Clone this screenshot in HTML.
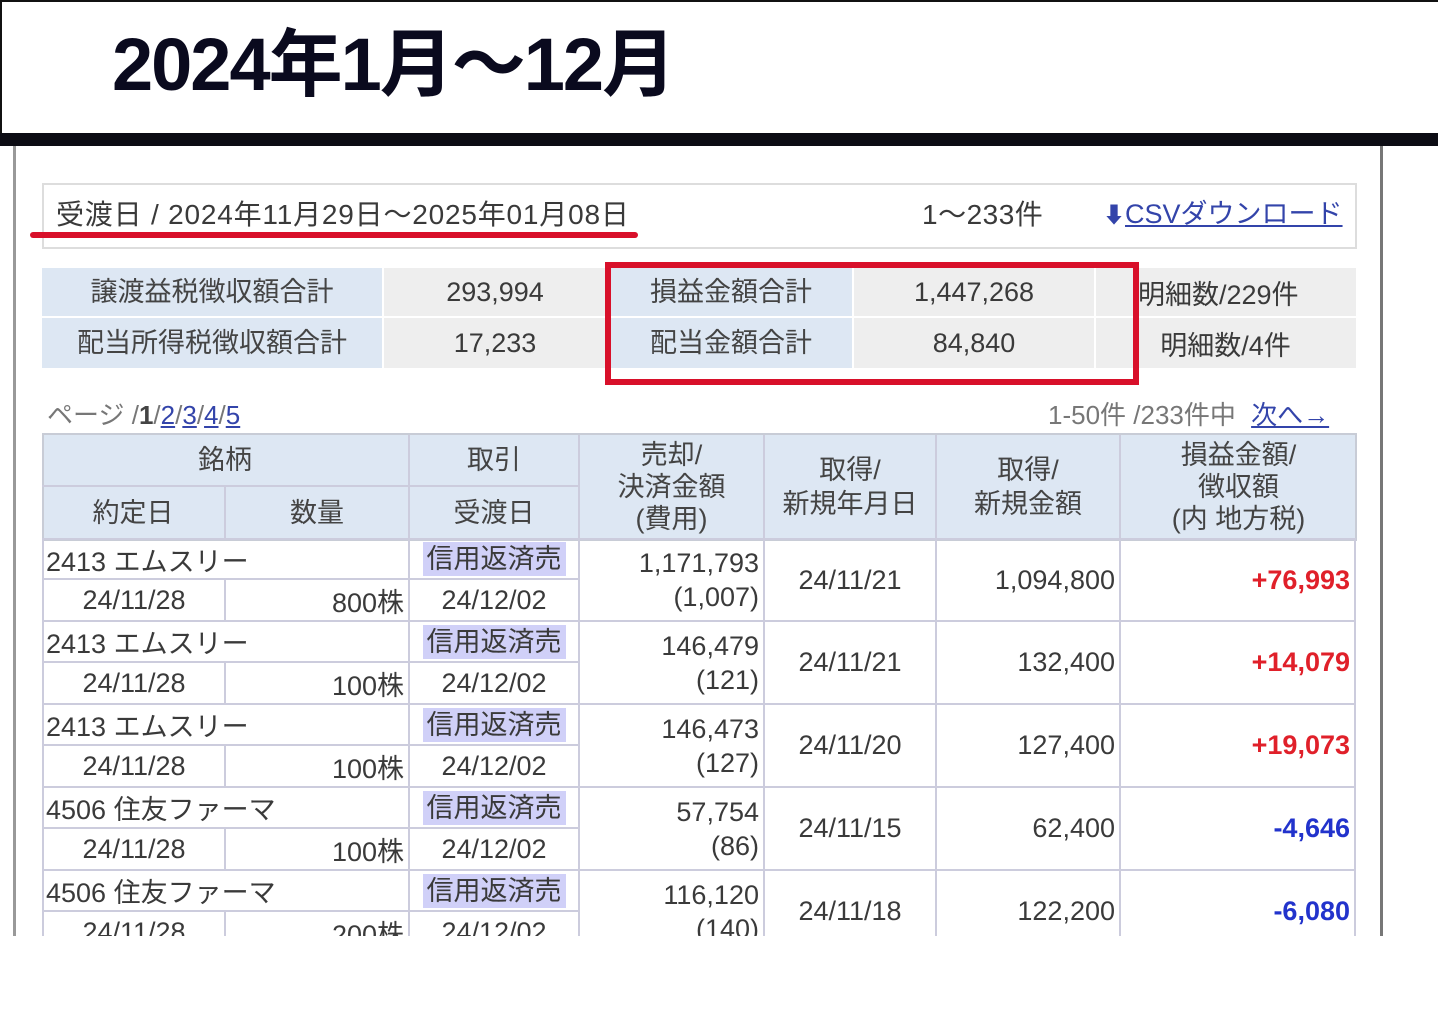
<!DOCTYPE html>
<html><head><meta charset="utf-8">
<style>
*{margin:0;padding:0;box-sizing:border-box}
body{width:1438px;height:1024px;background:#fff;position:relative;overflow:hidden;font-family:"Liberation Sans","Noto Sans CJK JP",sans-serif;color:#3a3a3a}
.a{position:absolute}
.t{position:absolute;font-size:27px;line-height:1;white-space:nowrap}
.c{position:absolute;display:flex;align-items:center;justify-content:center;font-size:27px;white-space:nowrap;border-right:2px solid #ccd;border-bottom:2px solid #ccd}
.hd{background:#dde7f3;color:#444;text-align:center;line-height:34px}
.r{justify-content:flex-end;padding-right:4px}
.l{justify-content:flex-start;padding-left:2px}
.bd{background:#d0d0f8;padding:0 4px;line-height:34px}
.red{color:#e0202a;font-weight:bold}
.blue{color:#2233cc;font-weight:bold}
</style></head><body>
<div class="a" style="left:0;top:0;width:1438px;height:135px;border-top:2px solid #111;border-left:2px solid #111"></div>
<div class="t" style="left:112px;top:28px;font-size:74px;font-weight:bold;color:#0a0a1e;letter-spacing:-2px">2024年1月〜12月</div>
<div class="a" style="left:0;top:133px;width:1438px;height:13px;background:#0c0c14"></div>
<div class="a" style="left:13px;top:146px;width:3px;height:790px;background:#999"></div>
<div class="a" style="left:1380px;top:146px;width:3px;height:790px;background:#777"></div>

<!-- header box -->
<div class="a" style="left:42px;top:183px;width:1315px;height:66px;border:2px solid #ddd"></div>
<div class="t" style="left:56px;top:201px;font-size:28px;letter-spacing:0.8px">受渡日 / 2024年11月29日〜2025年01月08日</div>
<div class="a" style="left:30px;top:232px;width:608px;height:6px;background:#d8102a;border-radius:3px"></div>
<div class="t" style="left:922px;top:201px;font-size:28px;letter-spacing:0.5px">1〜233件</div>
<div class="t" style="left:1103px;top:201px;font-size:27px;color:#3344aa"><span style="font-size:22px">&#11015;</span><span style="text-decoration:underline">CSVダウンロード</span></div>

<!-- summary -->
<div class="c hd" style="left:42px;top:268px;width:340px;height:50px;border:none;border-bottom:2px solid #fff">譲渡益税徴収額合計</div>
<div class="c hd" style="left:42px;top:318px;width:340px;height:50px;border:none">配当所得税徴収額合計</div>
<div class="c" style="left:384px;top:268px;width:222px;height:50px;background:#eee;border:none;border-bottom:2px solid #fff">293,994</div>
<div class="c" style="left:384px;top:318px;width:222px;height:50px;background:#eee;border:none">17,233</div>
<div class="c hd" style="left:610px;top:268px;width:242px;height:50px;border:none;border-bottom:2px solid #fff">損益金額合計</div>
<div class="c hd" style="left:610px;top:318px;width:242px;height:50px;border:none">配当金額合計</div>
<div class="c" style="left:854px;top:268px;width:240px;height:50px;background:#eee;border:none;border-bottom:2px solid #fff">1,447,268</div>
<div class="c" style="left:854px;top:318px;width:240px;height:50px;background:#eee;border:none">84,840</div>
<div class="c" style="left:1096px;top:268px;width:42px;height:50px;background:#eee;border:none;border-bottom:2px solid #fff"></div>
<div class="c" style="left:1096px;top:318px;width:42px;height:50px;background:#eee;border:none"></div>
<div class="c" style="left:1138px;top:268px;width:218px;height:50px;background:#eee;border:none;border-bottom:2px solid #fff;justify-content:flex-start">明細数/229件</div>
<div class="c" style="left:1138px;top:318px;width:175px;height:50px;background:#eee;border:none">明細数/4件</div>
<div class="a" style="left:1313px;top:318px;width:43px;height:50px;background:#eee"></div>
<div class="a" style="left:605px;top:262px;width:534px;height:123px;border:6px solid #d8102a"></div>

<div class="t" style="left:47px;top:402px;font-size:26px;color:#777">ページ /<b style="color:#444">1</b>/<u style="color:#3344aa">2</u>/<u style="color:#3344aa">3</u>/<u style="color:#3344aa">4</u>/<u style="color:#3344aa">5</u></div>
<div class="t" style="left:1048px;top:402px;font-size:26px;color:#777">1-50件 /233件中 <u style="color:#3344aa;margin-left:8px">次へ→</u></div>

<!-- table header -->
<div class="a" style="left:42px;top:433px;width:1315px;height:108px;background:#dde7f3;border:2px solid #c8ccd6"></div>
<div class="c hd" style="left:42px;top:435px;width:368px;height:52px;background:none">銘柄</div>
<div class="c hd" style="left:410px;top:435px;width:170px;height:52px;background:none">取引</div>
<div class="c hd" style="left:42px;top:487px;width:184px;height:53px;background:none">約定日</div>
<div class="c hd" style="left:226px;top:487px;width:184px;height:53px;background:none">数量</div>
<div class="c hd" style="left:410px;top:487px;width:170px;height:53px;background:none">受渡日</div>
<div class="c hd" style="left:580px;top:435px;width:185px;height:105px;background:none;line-height:32px">売却/<br>決済金額<br>(費用)</div>
<div class="c hd" style="left:765px;top:435px;width:172px;height:105px;background:none">取得/<br>新規年月日</div>
<div class="c hd" style="left:937px;top:435px;width:184px;height:105px;background:none">取得/<br>新規金額</div>
<div class="c hd" style="left:1121px;top:435px;width:235px;height:105px;background:none;border-right:none;line-height:32px">損益金額/<br>徴収額<br>(内 地方税)</div>

<!-- rows -->
<div class="a" style="left:0;top:540px;width:1438px;height:396px;overflow:hidden">
<div style="position:relative">
<div class="c l" style="left:42px;top:0;width:368px;height:40px;border-left:2px solid #ccd">2413 エムスリー</div>
<div class="c" style="left:410px;top:0;width:170px;height:40px"><span class="bd">信用返済売</span></div>
<div class="c" style="left:42px;top:40px;width:184px;height:42px;border-left:2px solid #ccd">24/11/28</div>
<div class="c r" style="left:226px;top:40px;width:184px;height:42px">800株</div>
<div class="c" style="left:410px;top:40px;width:170px;height:42px">24/12/02</div>
<div class="c r" style="left:580px;top:0;width:185px;height:82px;text-align:right;line-height:34px">1,171,793<br>(1,007)</div>
<div class="c" style="left:765px;top:0;width:172px;height:82px">24/11/21</div>
<div class="c r" style="left:937px;top:0;width:184px;height:82px">1,094,800</div>
<div class="c r red" style="left:1121px;top:0;width:235px;height:82px">+76,993</div>

<div class="c l" style="left:42px;top:82px;width:368px;height:41px;border-left:2px solid #ccd">2413 エムスリー</div>
<div class="c" style="left:410px;top:82px;width:170px;height:41px"><span class="bd">信用返済売</span></div>
<div class="c" style="left:42px;top:123px;width:184px;height:42px;border-left:2px solid #ccd">24/11/28</div>
<div class="c r" style="left:226px;top:123px;width:184px;height:42px">100株</div>
<div class="c" style="left:410px;top:123px;width:170px;height:42px">24/12/02</div>
<div class="c r" style="left:580px;top:82px;width:185px;height:83px;text-align:right;line-height:34px">146,479<br>(121)</div>
<div class="c" style="left:765px;top:82px;width:172px;height:83px">24/11/21</div>
<div class="c r" style="left:937px;top:82px;width:184px;height:83px">132,400</div>
<div class="c r red" style="left:1121px;top:82px;width:235px;height:83px">+14,079</div>

<div class="c l" style="left:42px;top:165px;width:368px;height:41px;border-left:2px solid #ccd">2413 エムスリー</div>
<div class="c" style="left:410px;top:165px;width:170px;height:41px"><span class="bd">信用返済売</span></div>
<div class="c" style="left:42px;top:206px;width:184px;height:42px;border-left:2px solid #ccd">24/11/28</div>
<div class="c r" style="left:226px;top:206px;width:184px;height:42px">100株</div>
<div class="c" style="left:410px;top:206px;width:170px;height:42px">24/12/02</div>
<div class="c r" style="left:580px;top:165px;width:185px;height:83px;text-align:right;line-height:34px">146,473<br>(127)</div>
<div class="c" style="left:765px;top:165px;width:172px;height:83px">24/11/20</div>
<div class="c r" style="left:937px;top:165px;width:184px;height:83px">127,400</div>
<div class="c r red" style="left:1121px;top:165px;width:235px;height:83px">+19,073</div>

<div class="c l" style="left:42px;top:248px;width:368px;height:41px;border-left:2px solid #ccd">4506 住友ファーマ</div>
<div class="c" style="left:410px;top:248px;width:170px;height:41px"><span class="bd">信用返済売</span></div>
<div class="c" style="left:42px;top:289px;width:184px;height:42px;border-left:2px solid #ccd">24/11/28</div>
<div class="c r" style="left:226px;top:289px;width:184px;height:42px">100株</div>
<div class="c" style="left:410px;top:289px;width:170px;height:42px">24/12/02</div>
<div class="c r" style="left:580px;top:248px;width:185px;height:83px;text-align:right;line-height:34px">57,754<br>(86)</div>
<div class="c" style="left:765px;top:248px;width:172px;height:83px">24/11/15</div>
<div class="c r" style="left:937px;top:248px;width:184px;height:83px">62,400</div>
<div class="c r blue" style="left:1121px;top:248px;width:235px;height:83px">-4,646</div>

<div class="c l" style="left:42px;top:331px;width:368px;height:41px;border-left:2px solid #ccd">4506 住友ファーマ</div>
<div class="c" style="left:410px;top:331px;width:170px;height:41px"><span class="bd">信用返済売</span></div>
<div class="c" style="left:42px;top:372px;width:184px;height:42px;border-left:2px solid #ccd">24/11/28</div>
<div class="c r" style="left:226px;top:372px;width:184px;height:42px">200株</div>
<div class="c" style="left:410px;top:372px;width:170px;height:42px">24/12/02</div>
<div class="c r" style="left:580px;top:331px;width:185px;height:83px;text-align:right;line-height:34px">116,120<br>(140)</div>
<div class="c" style="left:765px;top:331px;width:172px;height:83px">24/11/18</div>
<div class="c r" style="left:937px;top:331px;width:184px;height:83px">122,200</div>
<div class="c r blue" style="left:1121px;top:331px;width:235px;height:83px">-6,080</div>
</div></div>
</body></html>
